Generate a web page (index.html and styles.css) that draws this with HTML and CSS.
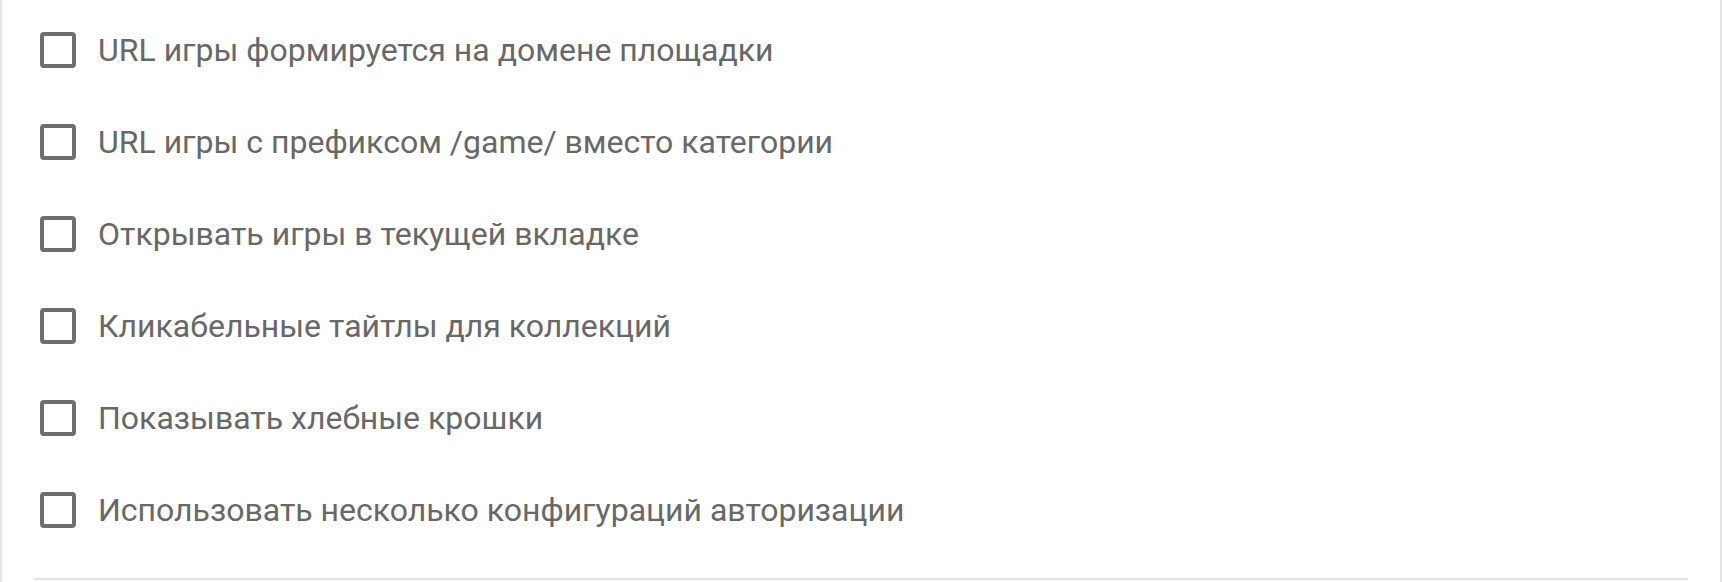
FILE: index.html
```html
<!DOCTYPE html>
<html lang="ru">
<head>
  <meta charset="UTF-8" />
  <title>Настройки площадки</title>
  <link rel="stylesheet" href="styles.css">
</head>
<body>
  <div class="settings-panel">
    <!-- Флаги поведения площадки -->
    <ul class="option-list">
      <li class="option">
        <span class="checkbox"></span>
        <span class="option-label">URL игры формируется на домене площадки</span>
      </li>
      <li class="option">
        <span class="checkbox"></span>
        <span class="option-label">URL игры с префиксом /game/ вместо категории</span>
      </li>
      <li class="option">
        <span class="checkbox"></span>
        <span class="option-label">Открывать игры в текущей вкладке</span>
      </li>
      <li class="option">
        <span class="checkbox"></span>
        <span class="option-label">Кликабельные тайтлы для коллекций</span>
      </li>
      <li class="option">
        <span class="checkbox"></span>
        <span class="option-label">Показывать хлебные крошки</span>
      </li>
      <li class="option">
        <span class="checkbox"></span>
        <span class="option-label">Использовать несколько конфигураций авторизации</span>
      </li>
    </ul>
    <div class="divider"></div>
  </div>
</body>
</html>
```

FILE: styles.css
```css
body {
  margin: 0;
  font-family: Roboto, 'Liberation Sans', sans-serif;
  background: #fff;
}

.settings-panel {
  width: 1722px;
  height: 582px;
  border-left: 2px solid #e4e4e4;
  border-right: 2px solid #e4e4e4;
  box-sizing: border-box;
  display: flex;
  flex-direction: column;
}

.option-list {
  list-style: none;
  margin: 0;
  padding: 4px 0 0 38px;
}

.option {
  height: 92px;
  display: flex;
  align-items: center;
  gap: 22px;
}

.checkbox {
  width: 36px;
  height: 36px;
  border: 4px solid #6e6e6e;
  border-radius: 4px;
  box-sizing: border-box;
  flex-shrink: 0;
}

.option-label {
  font-size: 32px;
  color: #686868;
}

.divider {
  margin: 22px 32px 0;
  height: 2px;
  background: #e4e4e4;
}
```
